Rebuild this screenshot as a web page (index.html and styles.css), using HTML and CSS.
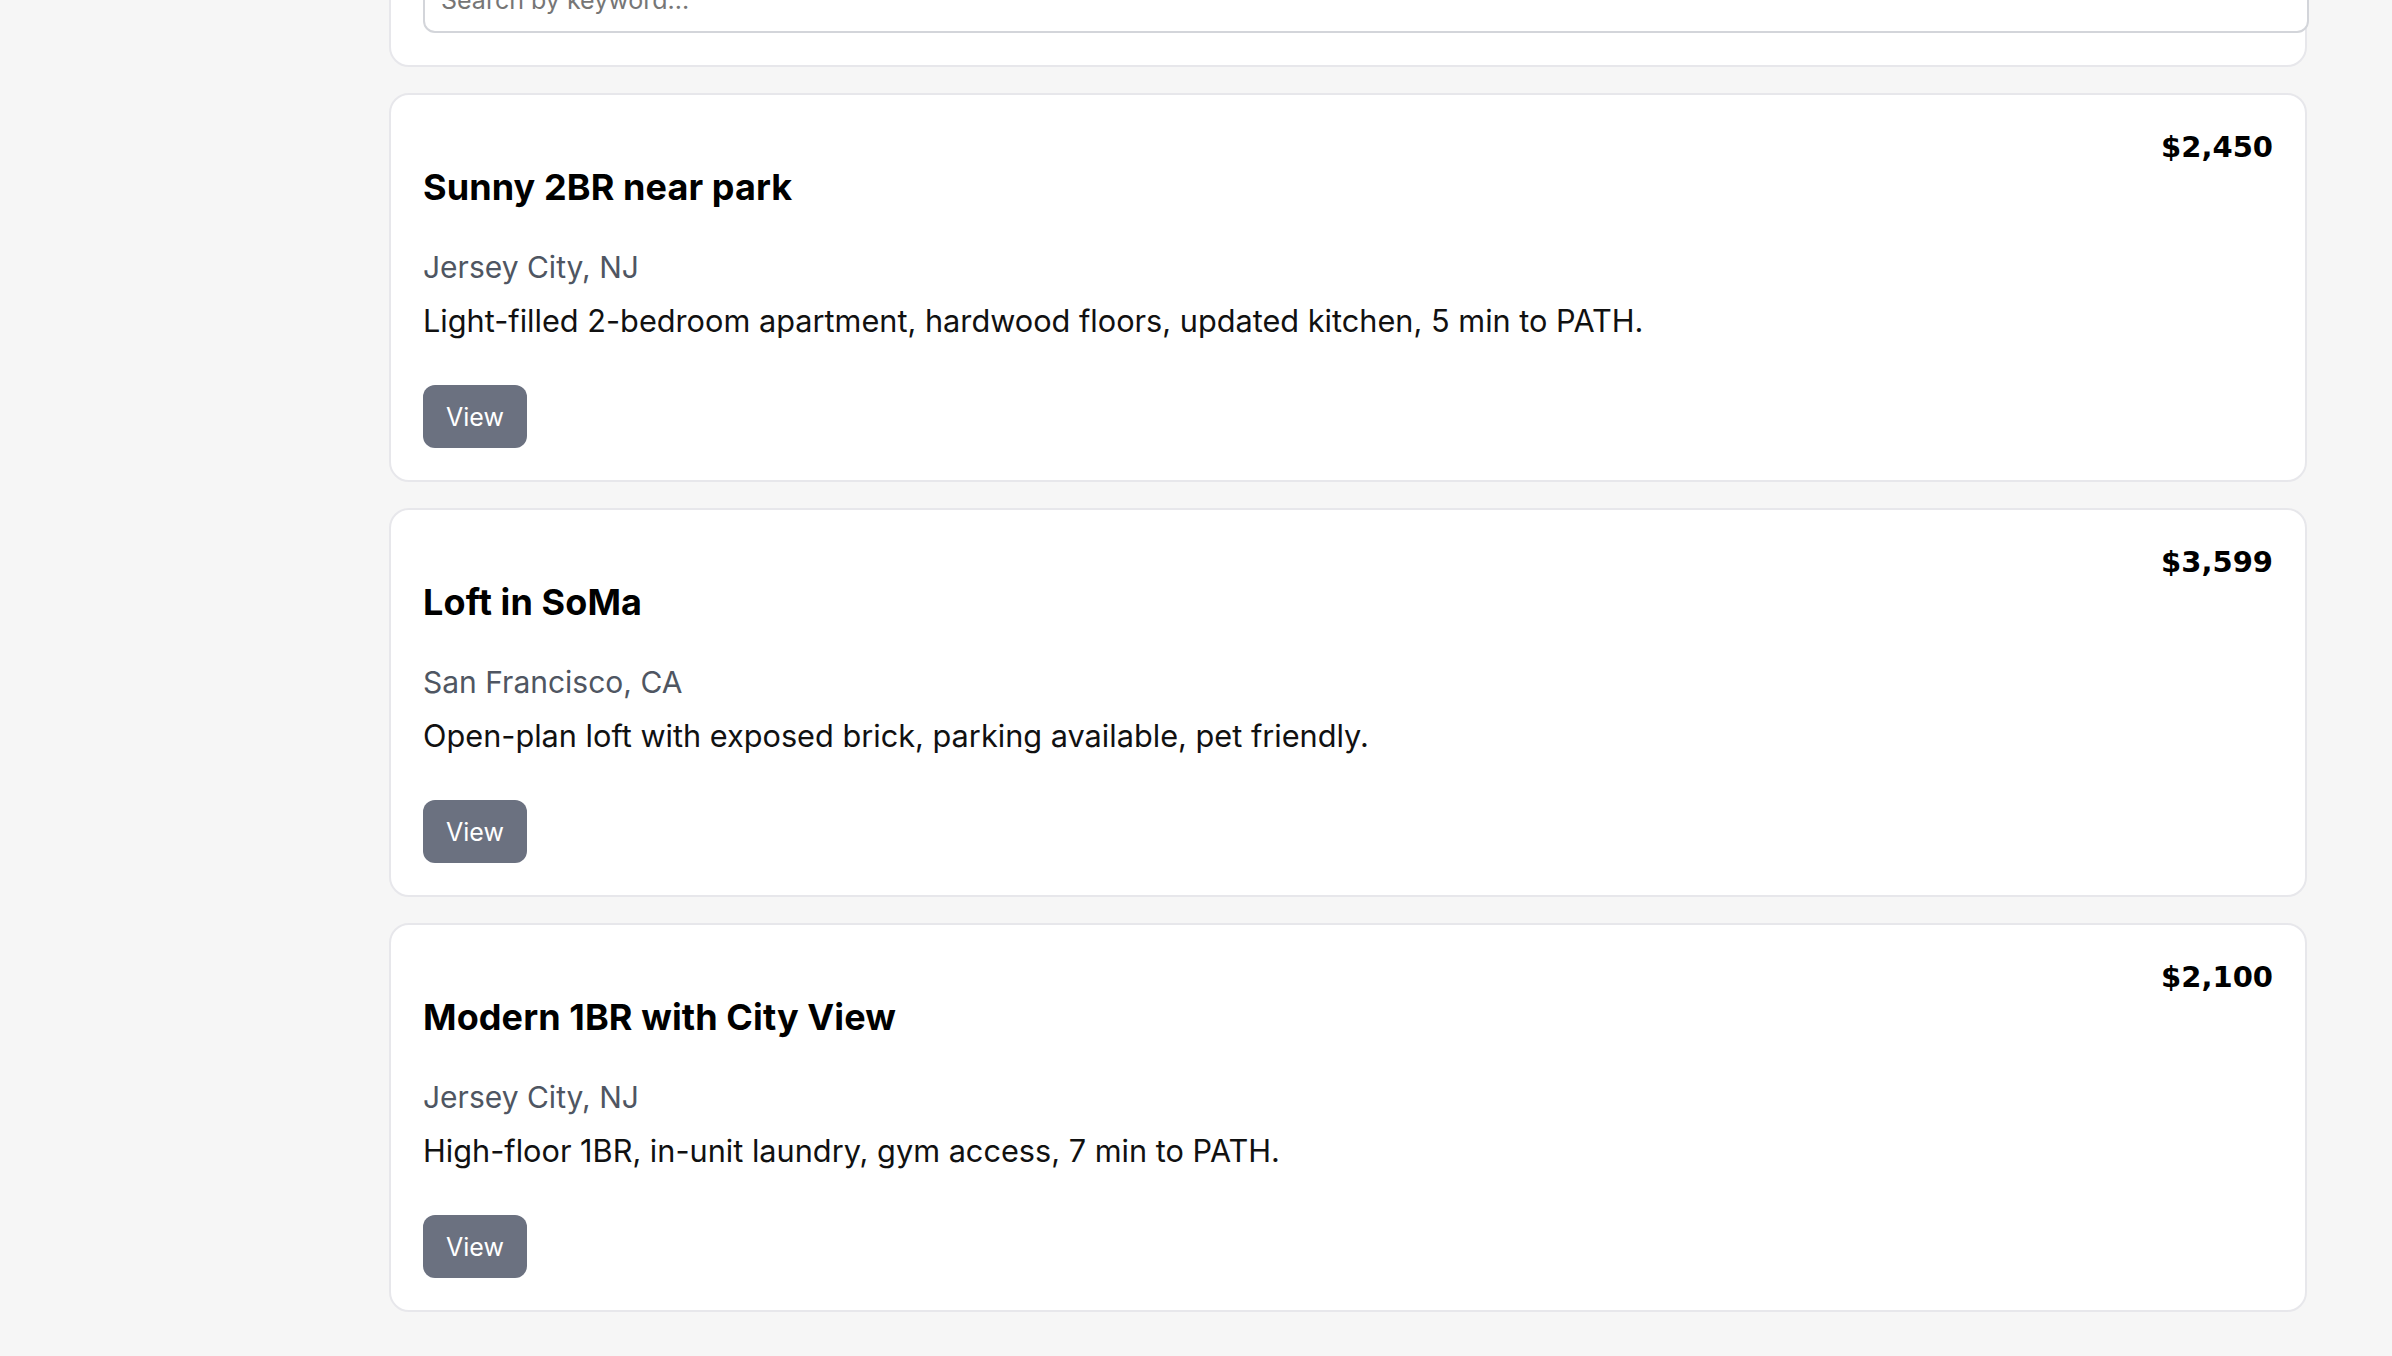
FILE: index.html
```html
<!DOCTYPE html>
<html lang="en">
<head>
<meta charset="utf-8">
<title>Listings</title>
<link rel="stylesheet" href="styles.css">
</head>
<body>
<main class="page">
  <section class="card search-card">
    <input class="search-input" type="text" placeholder="Search by keyword...">
  </section>

  <article class="card listing">
    <header class="listing-head">
      <h2 class="listing-title">Sunny 2BR near park</h2>
      <span class="listing-price">$2,450</span>
    </header>
    <p class="listing-location">Jersey City, NJ</p>
    <p class="listing-desc">Light-filled 2-bedroom apartment, hardwood floors, updated kitchen, 5 min to PATH.</p>
    <button class="btn-view" type="button">View</button>
  </article>

  <article class="card listing">
    <header class="listing-head">
      <h2 class="listing-title">Loft in SoMa</h2>
      <span class="listing-price">$3,599</span>
    </header>
    <p class="listing-location">San Francisco, CA</p>
    <p class="listing-desc">Open-plan loft with exposed brick, parking available, pet friendly.</p>
    <button class="btn-view" type="button">View</button>
  </article>

  <article class="card listing">
    <header class="listing-head">
      <h2 class="listing-title">Modern 1BR with City View</h2>
      <span class="listing-price">$2,100</span>
    </header>
    <p class="listing-location">Jersey City, NJ</p>
    <p class="listing-desc">High-floor 1BR, in-unit laundry, gym access, 7 min to PATH.</p>
    <button class="btn-view" type="button">View</button>
  </article>
</main>
</body>
</html>
```

FILE: styles.css
```css
html {
  background: #f6f6f6;
}

body {
  margin: 0;
  font-family: Inter, "Noto Sans", "Liberation Sans", sans-serif;
  color: #111;
}

.page {
  display: flex;
  flex-direction: column;
  gap: 26px;
  padding: 0 85px 47px 389px;
  margin-top: -67px;
}

.card {
  background: #fff;
  border: 2px solid #e7e7eb;
  border-radius: 20px;
  padding: 32px;
}

.search-input {
  display: block;
  width: 100%;
  box-sizing: content-box;
  padding: 16px;
  border: 2px solid #d3d5da;
  border-radius: 12px;
  font-family: Inter, "Noto Sans", sans-serif;
  font-size: 25px;
  line-height: 30px;
  color: #111;
  background: #fff;
  outline: none;
}

.search-input::placeholder {
  color: #767676;
}

.listing {
  display: flex;
  flex-direction: column;
  align-items: flex-start;
}

.listing-head {
  display: flex;
  justify-content: space-between;
  align-items: flex-start;
  width: 100%;
}

.listing-title {
  margin: 38px 0 0;
  font-size: 36px;
  line-height: 44px;
  font-weight: 700;
  letter-spacing: 0.1px;
  color: #000;
}

.listing-price {
  margin-top: 4px;
  font-family: "DejaVu Sans", Verdana, sans-serif;
  font-size: 29px;
  line-height: 32px;
  font-weight: 700;
  color: #000;
}

.listing-location {
  margin: 36px 0 0;
  font-size: 30px;
  line-height: 45px;
  color: #4f5662;
}

.listing-desc {
  margin: 8px 0 0;
  font-size: 30.7px;
  line-height: 45px;
  color: #111;
}

.btn-view {
  margin-top: 42px;
  height: 63px;
  padding: 0 23px;
  border: none;
  border-radius: 12px;
  background: #6b7180;
  color: #fff;
  font-family: Inter, "Noto Sans", sans-serif;
  font-size: 25px;
  cursor: pointer;
}
```
